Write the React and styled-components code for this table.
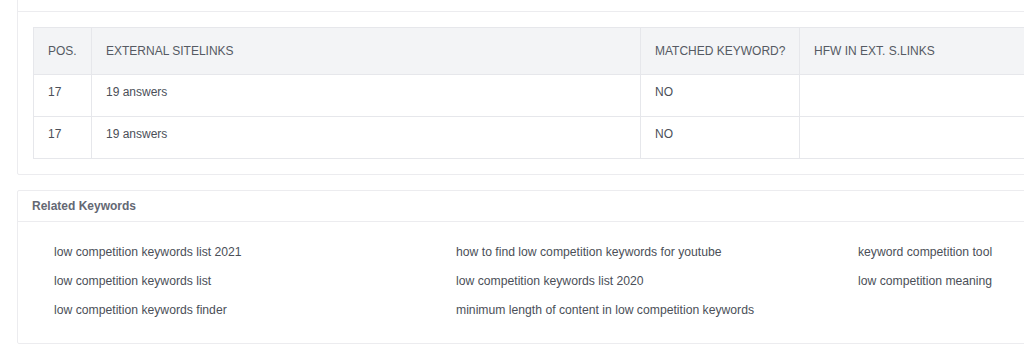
import styled, { createGlobalStyle } from "styled-components";

const GlobalStyle = createGlobalStyle`
    html, body {
        margin: 0;
        padding: 0;
        background: #ffffff;
        overflow: hidden;
    }
    body {
        font-family: "Liberation Sans", Arial, sans-serif;
        color: #4b4f58;
    }
`;

const Page = styled.div`
    display: flex;
    flex-direction: column;
    gap: 15px;
    padding: 0 0 0 17px;
    width: 1280px;
`;

const Card = styled.section`
    background: #fff;
    border: 1px solid #ececef;
    border-radius: 2px;
    margin-top: ${props => props.offset || 0}px;
`;

const CardHeader = styled.div`
    padding: 7px 14px;
    line-height: 16px;
    font-size: 12px;
    font-weight: 700;
    color: #646873;
    border-bottom: 1px solid #ececef;
`;

const CardBody = styled.div`
    padding: ${props => props.pad || "15px"};
`;

const Table = styled.table`
    border-collapse: collapse;
    table-layout: fixed;
    width: 1200px;
    font-size: 12px;
    color: #4b4f58;
    border: 1px solid #e6e7eb;

    th, td {
        text-align: left;
        padding: 0 14px;
        border-right: 1px solid #e6e7eb;
        border-bottom: 1px solid #e6e7eb;
        white-space: nowrap;
    }

    th {
        background: #f3f4f6;
        font-weight: 400;
        text-transform: uppercase;
        height: 46px;
        color: #555a63;
    }

    td {
        vertical-align: top;
        padding-top: 8px;
        height: 33px;
        line-height: 18px;
    }
`;

const KeywordGrid = styled.div`
    display: grid;
    grid-template-columns: repeat(3, 402px);
    grid-auto-flow: column;
    grid-template-rows: repeat(3, 18px);
    row-gap: 11px;
    font-size: 12.2px;
    line-height: 18px;
    color: #4b4f58;
`;

const Keyword = styled.div`
    white-space: nowrap;
`;

const sitelinks = [
    { pos: 17, text: "19 answers", matched: "NO", hfw: "" },
    { pos: 17, text: "19 answers", matched: "NO", hfw: "" },
];

const keywords = [
    "low competition keywords list 2021",
    "low competition keywords list",
    "low competition keywords finder",
    "how to find low competition keywords for youtube",
    "low competition keywords list 2020",
    "minimum length of content in low competition keywords",
    "keyword competition tool",
    "low competition meaning",
];

const App = () => {
    return (
        <>
            <GlobalStyle />
            <Page>
                <Card offset={-20}>
                    <CardHeader>External Sitelinks</CardHeader>
                    <CardBody>
                        <Table>
                            <colgroup>
                                <col style={{ width: 58 }} />
                                <col style={{ width: 549 }} />
                                <col style={{ width: 159 }} />
                                <col />
                            </colgroup>
                            <thead>
                                <tr>
                                    <th>Pos.</th>
                                    <th>External Sitelinks</th>
                                    <th>Matched Keyword?</th>
                                    <th>HFW in Ext. S.Links</th>
                                </tr>
                            </thead>
                            <tbody>
                                {sitelinks.map((row, i) => (
                                    <tr key={i}>
                                        <td>{row.pos}</td>
                                        <td>{row.text}</td>
                                        <td>{row.matched}</td>
                                        <td>{row.hfw}</td>
                                    </tr>
                                ))}
                            </tbody>
                        </Table>
                    </CardBody>
                </Card>
                <Card>
                    <CardHeader>Related Keywords</CardHeader>
                    <CardBody pad="21px 36px 24px">
                        <KeywordGrid>
                            {keywords.map((k) => (
                                <Keyword key={k}>{k}</Keyword>
                            ))}
                        </KeywordGrid>
                    </CardBody>
                </Card>
            </Page>
        </>
    );
};

export default App;
